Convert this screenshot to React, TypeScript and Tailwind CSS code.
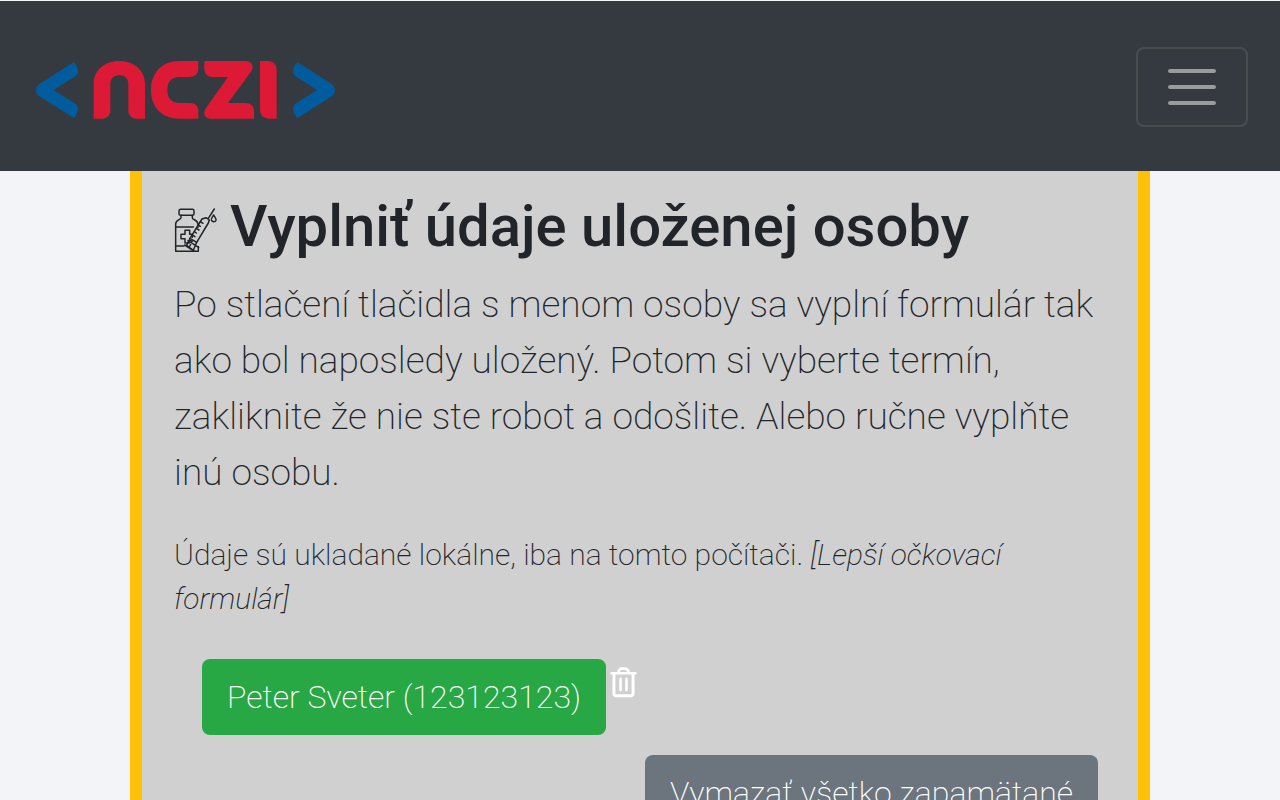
import React from "react";

function Logo() {
  return (
    <svg viewBox="45 60 900 180" className="h-[60px] w-[300px]" role="img" aria-label="NCZI">
      <g fill="#005c9c">
        <path d="M162 66C169 74 177 90 173 100C172 104 169 107 164 110L101 150L164 190C169 193 172 196 173 200C177 210 169 226 162 235L58 169C44 159 44 142 58 132Z" />
        <path d="M832 66C825 74 816 90 820 100C821 104 824 107 829 110L891 150L829 190C824 193 821 196 820 200C816 210 825 226 832 235L935 169C948 159 948 142 935 132Z" />
      </g>
      <g fill="#dd1a35">
        <path d="M221 236V132C221 91 254 63 298 63C342 63 375 91 375 132V236H350C334 236 325 226 325 210V132C325 116 314 106 298 106C282 106 271 116 271 132V210C271 226 262 236 246 236Z" />
        <path d="M535 63H478C426 63 393 98 393 150C393 202 426 236 478 236H535V214C535 197 526 189 510 189H478C454 189 442 174 442 150C442 126 454 111 478 111H505C525 111 535 102 535 84Z" />
        <path d="M553 63H676C696 63 704 80 693 95L624 189H675C693 189 702 198 702 214V236H574C553 236 547 219 558 204L624 111H580C562 111 553 102 553 84Z" />
        <path d="M720 63H742C760 63 770 74 770 92V236H749C730 236 720 226 720 207Z" />
      </g>
    </svg>
  );
}

function VaccineIcon() {
  return (
    <svg
      viewBox="0 0 132 138"
      className="mt-2 h-[46px] w-[44px] shrink-0"
      fill="none"
      stroke="#212529"
      strokeWidth="4.5"
      strokeLinecap="round"
      strokeLinejoin="round"
      aria-hidden="true"
    >
      <rect x="15" y="7" width="45" height="18" rx="5" />
      <path d="M21 25V32C21 39 5 37 5 51V133H73V119M55 25V32C55 39 71 38 72 51V61" />
      <path d="M5 60H58M5 117H30" />
      <path d="M52 101H46V108H33V95H21V82H33V70H47V82H55V91" />
      <path d="M121 6L103 34M96 32L106 39L103 48L68 106L48 94L84 36Z" />
      <path d="M79 44L87 49M73 54L79 58M67 64L75 69M61 74L67 78M55 84L63 89" />
      <path d="M42 101L74 121M48 94L38 115L58 130L68 106M32 114L60 132M55 102L46 120" />
      <path d="M119 24C115 30 111 35 112 39C114 45 123 46 126 40C128 35 122 30 119 24Z" />
    </svg>
  );
}

function TrashIcon() {
  return (
    <svg viewBox="0 0 80 94" className="h-[31px] w-[27px]" fill="none" stroke="white" aria-hidden="true">
      <path d="M4 19H76" strokeWidth="8" strokeLinecap="round" />
      <path d="M11 19V80Q11 87 18 87H62Q69 87 69 80V19" strokeWidth="9" />
      <path d="M24 17Q27 5 34 5H46Q53 5 56 17" strokeWidth="8" />
      <path d="M31 36V70M49 36V70" strokeWidth="8" strokeLinecap="round" />
    </svg>
  );
}

export default function App() {
  return (
    <div className="flex min-h-screen flex-col bg-[#f3f4f7] font-['Roboto','Liberation_Sans',sans-serif] font-extralight text-[#212529]">
      <header className="mt-px flex h-[170px] items-center justify-between bg-[#343a40] px-8">
        <a href="#" className="ml-[3px] mt-2">
          <Logo />
        </a>
        <button
          type="button"
          aria-label="Menu"
          className="mt-0.5 flex h-20 w-28 items-center justify-center rounded-lg border-2 border-[#484d50]"
        >
          <svg viewBox="0 0 48 40" className="h-10 w-12" stroke="#999c9f" strokeWidth="4" strokeLinecap="round" aria-hidden="true">
            <path d="M2 4H46M2 20H46M2 36H46" />
          </svg>
        </button>
      </header>
      <main className="mx-auto w-full max-w-[1020px] flex-1 border-x-12 border-[#ffc107] bg-[#d0d0d0] px-8 pt-5 pb-8">
        <h1 className="flex items-center gap-3 text-[58px] leading-[70px] font-medium">
          <VaccineIcon />
          Vyplniť údaje uloženej osoby
        </h1>
        <p className="mt-4 text-[37px] leading-14">
          Po stlačení tlačidla s menom osoby sa vyplní formulár tak ako bol naposledy uložený. Potom si vyberte termín,
          zakliknite že nie ste robot a odošlite. Alebo ručne vyplňte inú osobu.
        </p>
        <p className="mt-8 text-[30px] leading-11">
          Údaje sú ukladané lokálne, iba na tomto počítači. <em>[Lepší očkovací formulár]</em>
        </p>
        <div className="mt-[38px] ml-7 flex items-start gap-1">
          <button type="button" className="h-[76px] rounded-lg bg-[#28a745] px-[25px] text-[32px] text-white">
            Peter Sveter (123123123)
          </button>
          <button type="button" aria-label="Vymazať osobu" className="mt-2">
            <TrashIcon />
          </button>
        </div>
        <div className="mt-5 flex justify-end pr-2">
          <button type="button" className="h-[76px] rounded-lg bg-[#6c757d] px-[25px] text-[32px] text-white">
            Vymazať všetko zapamätané
          </button>
        </div>
      </main>
    </div>
  );
}
